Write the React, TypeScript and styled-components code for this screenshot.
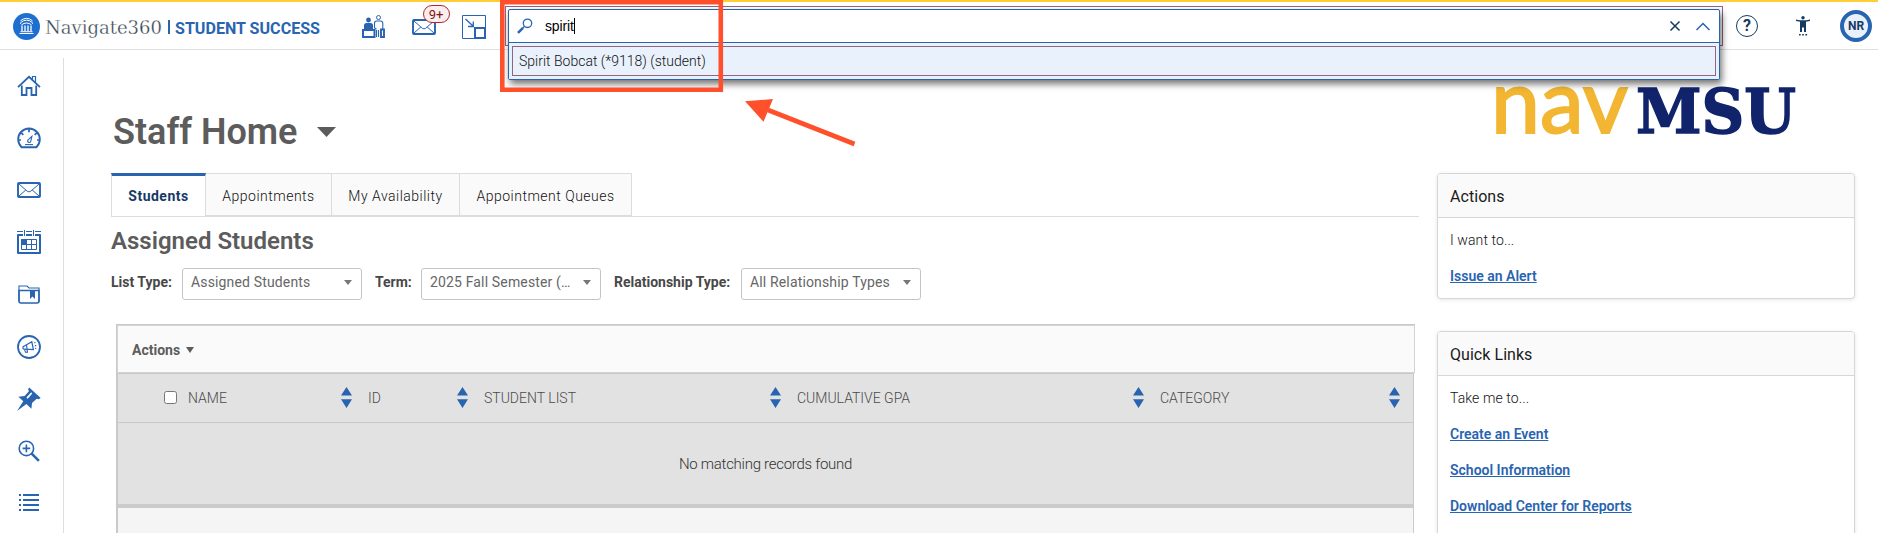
import styled, { createGlobalStyle } from "styled-components";

const colors = {
  blue: "#2864b0",
  navy: "#173a64",
  gray: "#5c5c5c",
  line: "#dcdcdc",
  mauve: "#8f6580",
  mark: "#ff4f2b",
};

const HomeIcon = () => (
  <svg width="24" height="22" viewBox="0 0 24 22" fill="none" stroke={colors.blue}>
    <path d="M1 12.2 12 1.8l11 10.4" strokeWidth="1.8" />
    <path d="M4.8 10.5V20h4.7v-7h5v7h4.7v-9.5" strokeWidth="1.8" />
    <path d="M15.5 4V1.5h3V7" strokeWidth="1.2" />
  </svg>
);

const GaugeIcon = () => (
  <svg width="24" height="21" viewBox="0 0 24 21" fill="none" stroke={colors.blue}>
    <path d="M4.6 19.2A10.8 10.8 0 1 1 19.4 19.2Z" strokeWidth="1.9" strokeLinejoin="round" />
    <path d="M12 1v3.2M1 12h3M20 12h3M4.3 4.8l2 2M19.7 4.8l-2 2" strokeWidth="1.7" />
    <path d="M14.9 8.3 13.8 13a1.6 1.6 0 1 1-2.2-1.6Z" strokeWidth="1.1" />
    <path d="M8 16.6h8" strokeWidth="1.1" />
  </svg>
);

const MailIcon = () => (
  <svg width="24" height="16" viewBox="0 0 24 16" fill="none" stroke={colors.blue}>
    <rect x="1" y="1" width="22" height="14" rx="1" strokeWidth="1.9" />
    <path d="m2 2 8.2 7.2q1.8 1.4 3.6 0L22 2M2 14l6.8-6M22 14l-6.8-6" strokeWidth="1" />
  </svg>
);

const CalendarIcon = () => (
  <svg width="24" height="24" viewBox="0 0 24 24" fill="none" stroke={colors.blue}>
    <path d="M0 1.5h6M9 1.5h6M18 1.5h6M7.5 0v6M16.5 0v6" strokeWidth="1" />
    <path d="M6 5H1v18h22V5h-5M9 5h6" strokeWidth="2" strokeLinejoin="round" />
    <path d="M4.5 9.5h15v10h-15zM4.5 14.5h15M9.5 9.5v10M14.5 9.5v10" strokeWidth="1" />
    <path d="M4.5 9.5h5v5h-5z" fill={colors.blue} />
  </svg>
);

const FolderIcon = () => (
  <svg width="22" height="19" viewBox="0 0 22 19" fill="none" stroke={colors.blue}>
    <path d="M1 16V1h8l2 2h10v13.5" strokeWidth="1.1" />
    <path d="M1 5.5h20V16q0 2-2 2H3q-2 0-2-2Z" strokeWidth="1.6" />
    <path d="M12 5h5v9l-2.5-2.4L12 14Z" fill={colors.blue} stroke="none" />
  </svg>
);

const MegaphoneIcon = () => (
  <svg width="24" height="24" viewBox="0 0 24 24" fill="none" stroke={colors.blue}>
    <circle cx="12" cy="12" r="11" strokeWidth="1.8" />
    <path d="m7 11.2 7.8-4.4 1.6 7.8-8.6-.4a1.5 1.5 0 0 1-.8-3Z" strokeWidth="1.2" />
    <path d="m7.5 14.3 1 3h2l-.5-3M9.5 10l.6 4M17.4 8l1-.7M17.8 10.6h1.4M18.2 13.3l1 .6" strokeWidth="1.1" />
  </svg>
);

const PinIcon = () => (
  <svg width="24" height="24" viewBox="0 0 24 24" fill={colors.blue}>
    <path d="M12.2.4 23.7 11l-2 1.2-2-.4-4.7 4.3-.6 5.6-5-4.6L0 24l6.3-9.8-4.9-4.4 6.2-.8 4.3-4.8-.8-2Z" />
    <path d="m14.2 6.5-3.7 4.1" stroke="#fff" strokeWidth="1.8" strokeLinecap="round" />
  </svg>
);

const ZoomInIcon = () => (
  <svg width="22" height="22" viewBox="0 0 22 22" fill="none" stroke={colors.blue}>
    <circle cx="8.4" cy="8.4" r="7.2" strokeWidth="1.6" />
    <path d="M8.4 4.6v7.6M4.6 8.4h7.6" strokeWidth="1.6" />
    <path d="m13.4 13.4 7.5 7.5" strokeWidth="2.6" />
  </svg>
);

const ListIcon = () => (
  <svg width="20" height="18" viewBox="0 0 20 18" stroke={colors.blue} strokeWidth="2">
    <path d="M0 1h2M4 1h16M0 6h2M4 6h16M0 11h2M4 11h16M0 16h2M4 16h16" />
  </svg>
);

const PeopleIcon = () => (
  <svg width="23" height="23" viewBox="0 0 23 23" fill="none" stroke={colors.blue}>
    <circle cx="6.5" cy="5" r="2.4" fill={colors.blue} stroke="none" />
    <path d="M2 14v-3.5q0-2.5 2.5-2.5h4Q11 8 11 10.5V14Z" fill={colors.blue} stroke="none" />
    <path d="M1 15h11.5v7H1Z" strokeWidth="2" />
    <circle cx="16.5" cy="2.5" r="2" strokeWidth="1" />
    <path d="M14.5 15v7M14.5 14l-2-1V8.5q0-2.5 2-2.5h4q2.3 0 2.3 2.5V14M16.5 15v7" strokeWidth="1.1" />
    <path d="M19 14.5h3V22h-3Z" strokeWidth="1.9" />
  </svg>
);

const ResizeIcon = () => (
  <svg width="24" height="24" viewBox="0 0 24 24" fill="none" stroke={colors.blue}>
    <path d="M.5.5h23v23H.5Z" strokeWidth="1" />
    <path d="M13 13h10v10H13Z" strokeWidth="2" />
    <path d="m3.5 4 7.5 7M11.3 6.5v5H6" strokeWidth="1.3" />
  </svg>
);

const SearchIcon = () => (
  <svg width="16" height="16" viewBox="0 0 16 16" fill="none" stroke={colors.blue}>
    <circle cx="10.5" cy="5.3" r="4.2" strokeWidth="1.3" />
    <path d="m7.3 8.5-1.6 1.6" strokeWidth="1.3" />
    <path d="m6 9.8-5 5" strokeWidth="2.4" />
  </svg>
);

const AccessIcon = () => (
  <svg width="16" height="20" viewBox="0 0 16 20" fill={colors.navy}>
    <circle cx="8" cy="1.7" r="1.7" />
    <path d="M1 3.4q7 1.8 14 0v1.7l-4 .7V16H9v-4.5H7V16H5V5.8l-4-.7Z" />
    <path d="M4 18h1.7v1.5H4zM7.2 18h1.7v1.5H7.2zM10.4 18h1.7v1.5h-1.7z" />
  </svg>
);

const LogoMark = () => (
  <svg width="27" height="27" viewBox="0 0 27 27" fill="none" stroke="#fff">
    <circle cx="13.5" cy="13.5" r="13.5" fill="#1f6fd0" stroke="none" />
    <path d="M7.5 10.8V9.8q6-5.4 12 0v1M7.500 7.800q6-5 12 0M8.500 11.800q5-3.600 10 0" strokeWidth="1" />
    <path d="M9 12.5V18M12 12.5V18M15 12.5V18M18 12.5V18" strokeWidth="1.3" />
    <path d="M7.5 18.7h12M6.5 20.5h14" strokeWidth="1" />
  </svg>
);

const SortIcon = () => (
  <svg width="11" height="21" viewBox="0 0 11 21" fill={colors.blue}>
    <path d="M5.5 0 11 8.5H0ZM5.5 21 0 12.2h11Z" />
  </svg>
);

const Caret = ({ width = 8, height = 5, color = "#777" }) => (
  <svg width={width} height={height} viewBox="0 0 10 6" preserveAspectRatio="none" fill={color}>
    <path d="M0 0h10L5 6Z" />
  </svg>
);

const sideIcons = [
  HomeIcon,
  GaugeIcon,
  MailIcon,
  CalendarIcon,
  FolderIcon,
  MegaphoneIcon,
  PinIcon,
  ZoomInIcon,
  ListIcon,
];

const tabs = [
  { label: "Students", width: 95 },
  { label: "Appointments", width: 126 },
  { label: "My Availability", width: 128 },
  { label: "Appointment Queues", width: 172 },
];

const filters = [
  { label: "List Type:", value: "Assigned Students", labelWidth: 71 },
  { label: "Term:", value: "2025 Fall Semester (…", labelWidth: 46 },
  { label: "Relationship Type:", value: "All Relationship Types", labelWidth: 127 },
];

const columns = ["NAME", "ID", "STUDENT LIST", "CUMULATIVE GPA", "CATEGORY"];

const App = () => {
  return (
    <>
      <GlobalStyle />
      <Header>
        <Brand>
          <LogoMark />
          <svg className="wordmark" width="118" height="27">
            <text x="0" y="20.5" textLength="117" lengthAdjust="spacingAndGlyphs">
              Navigate360
            </text>
          </svg>
          <span className="divider" />
          <svg className="product" width="146" height="27">
            <text x="0" y="20.5" textLength="145" lengthAdjust="spacingAndGlyphs">
              STUDENT SUCCESS
            </text>
          </svg>
        </Brand>
        <QuickIcons>
          <PeopleIcon />
          <MailButton>
            <MailIcon />
            <Badge>9+</Badge>
          </MailButton>
          <ResizeIcon />
        </QuickIcons>
        <SearchOutline>
          <SearchBox>
            <SearchField>
              <SearchIcon />
              <span className="query">spirit</span>
              <svg width="10" height="10" viewBox="0 0 10 10" stroke={colors.navy} strokeWidth="1.5">
                <path d="m.5.5 9 9M9.5.5l-9 9" />
              </svg>
              <svg width="14" height="9" viewBox="0 0 14 9" fill="none" stroke={colors.blue} strokeWidth="1.5">
                <path d="m.5 8 6.5-6.5L13.5 8" />
              </svg>
            </SearchField>
            <Suggestions>
              <Suggestion>Spirit Bobcat (*9118) (student)</Suggestion>
            </Suggestions>
          </SearchBox>
        </SearchOutline>
        <UserTools>
          <HelpButton>?</HelpButton>
          <AccessIcon />
          <Avatar>NR</Avatar>
        </UserTools>
      </Header>

      <Body>
        <Sidebar>
          {sideIcons.map((Icon, i) => (
            <SideItem key={i}>
              <Icon />
            </SideItem>
          ))}
        </Sidebar>

        <Main>
          <PageTitle>
            Staff Home
            <Caret width={19} height={10} color={colors.gray} />
          </PageTitle>
          <TabBar>
            {tabs.map((tab, i) => (
              <Tab key={tab.label} $active={i === 0} $width={tab.width}>
                {tab.label}
              </Tab>
            ))}
          </TabBar>
          <SectionTitle>Assigned Students</SectionTitle>
          <FilterRow>
            {filters.map((filter) => (
              <Filter key={filter.label}>
                <FilterLabel $width={filter.labelWidth}>{filter.label}</FilterLabel>
                <Select>
                  {filter.value}
                  <Caret />
                </Select>
              </Filter>
            ))}
          </FilterRow>
          <TablePanel>
            <TableToolbar>
              Actions
              <Caret width={8} height={6} color={colors.gray} />
            </TableToolbar>
            <Table>
              <TableHead>
                {columns.map((column, i) => (
                  <HeadCell key={column} $first={i === 0}>
                    {i === 0 && <input type="checkbox" />}
                    <span>{column}</span>
                    <SortIcon />
                  </HeadCell>
                ))}
              </TableHead>
              <EmptyRow>No matching records found</EmptyRow>
            </Table>
          </TablePanel>
        </Main>

        <Aside>
          <CampusLogo width="305" height="55" viewBox="0 0 305 55">
            <text className="nav" x="-4" y="51" textLength="137" lengthAdjust="spacingAndGlyphs">
              nav
            </text>
            <text className="msu" x="141" y="50.5" textLength="160" lengthAdjust="spacingAndGlyphs">
              MSU
            </text>
          </CampusLogo>
          <Card>
            <h2>Actions</h2>
            <div className="content">
              <p>I want to...</p>
              <a href="#">Issue an Alert</a>
            </div>
          </Card>
          <Card $grow>
            <h2>Quick Links</h2>
            <div className="content">
              <p>Take me to...</p>
              <a href="#">Create an Event</a>
              <a href="#">School Information</a>
              <a href="#">Download Center for Reports</a>
            </div>
          </Card>
        </Aside>
      </Body>

      <Callout width="400" height="160" viewBox="480 0 400 160">
        <path d="M502.3 2.2h218.5v87.5H502.3Z" fill="none" stroke={colors.mark} strokeWidth="4.6" />
        <path d="m768 110 86.5 34" stroke={colors.mark} strokeWidth="4.6" />
        <path d="m745 101.3 28-2.3-9.5 22.8Z" fill={colors.mark} />
      </Callout>
    </>
  );
};

const GlobalStyle = createGlobalStyle`
  * {
    box-sizing: border-box;
  }
  body {
    margin: 0;
    height: 533px;
    overflow: hidden;
    background: #fff;
    font-family: Roboto, "Liberation Sans", sans-serif;
    color: #2b2b2b;
  }
  svg {
    display: block;
    flex-shrink: 0;
    overflow: visible;
  }
`;

const Header = styled.header`
  display: flex;
  height: 50px;
  border-top: 2px solid #ffcd34;
  border-bottom: 1px solid #e0e0e0;
`;

const Brand = styled.div`
  display: flex;
  align-items: center;
  width: 362px;
  height: 49px;
  padding-left: 13px;

  .wordmark {
    margin-left: 5px;
    font-family: "DejaVu Serif", serif;
    font-size: 19px;
    fill: #34434f;
    stroke: #fff;
    stroke-width: 0.3px;
  }
  .divider {
    width: 2px;
    height: 14px;
    margin: 0 5px 0 5px;
    background: ${colors.blue};
  }
  .product {
    font-size: 17px;
    font-weight: 700;
    fill: ${colors.blue};
  }
`;

const QuickIcons = styled.div`
  display: flex;
  align-items: center;
  gap: 26.5px;
  width: 143px;
  height: 49px;
`;

const MailButton = styled.div`
  position: relative;
`;

const Badge = styled.span`
  position: absolute;
  top: -14px;
  left: 11px;
  width: 27px;
  height: 18px;
  border: 1px solid #b3262b;
  border-radius: 9px;
  background: #fdeeee;
  color: #7d1518;
  font-size: 13px;
  line-height: 17px;
  text-align: center;
`;

const SearchOutline = styled.div`
  width: 1218px;
  height: 40px;
  margin-top: 4px;
  padding: 2px;
  border: 1px solid ${colors.mauve};
`;

const SearchBox = styled.div`
  position: relative;
  z-index: 2;
  width: 1212px;
  height: 71px;
  border: 1px solid ${colors.blue};
  border-radius: 2px;
  background: #fff;
  box-shadow: 2px 4px 7px rgba(0, 0, 0, 0.55);
`;

const SearchField = styled.div`
  display: flex;
  align-items: center;
  height: 32px;
  padding: 0 9px 0 8px;

  .query {
    margin: 0 auto 0 12px;
    border-right: 1px solid #000;
    color: #000;
    font-family: "Liberation Sans", Arial, sans-serif;
    font-size: 14px;
    line-height: 16px;
    letter-spacing: -0.15px;
  }
  svg + svg {
    margin-left: 16px;
  }
`;

const Suggestions = styled.div`
  height: 37px;
  padding: 3px;
  border-top: 1px solid ${colors.blue};
  background: #e9f1fc;
`;

const Suggestion = styled.div`
  height: 30px;
  padding-left: 6px;
  border: 1px solid ${colors.mauve};
  color: #111;
  font-size: 14px;
  font-weight: 300;
  line-height: 28px;
`;

const UserTools = styled.div`
  display: flex;
  align-items: center;
  height: 47px;
  padding-left: 13px;
  gap: 37px;
`;

const HelpButton = styled.div`
  width: 22px;
  height: 22px;
  border: 1px solid ${colors.navy};
  border-radius: 50%;
  color: ${colors.navy};
  font-size: 16px;
  font-weight: 700;
  line-height: 20px;
  text-align: center;
`;

const Avatar = styled.div`
  width: 32px;
  height: 32px;
  margin-left: -8px;
  border: 4px solid ${colors.blue};
  border-radius: 50%;
  background: #e9f1fc;
  color: ${colors.navy};
  font-size: 12px;
  font-weight: 700;
  line-height: 25px;
  text-align: center;
`;

const Body = styled.div`
  display: flex;
  height: 483px;
`;

const Sidebar = styled.nav`
  width: 64px;
  height: 475px;
  margin-top: 8px;
  padding-top: 2px;
  border-right: 1px solid #dedede;
`;

const SideItem = styled.div`
  display: flex;
  align-items: center;
  justify-content: center;
  width: 58px;
  height: 52.1px;
`;

const Main = styled.main`
  width: 1308px;
  margin-left: 47px;
  padding-top: 61px;
`;

const PageTitle = styled.h1`
  display: flex;
  align-items: center;
  gap: 20px;
  height: 42px;
  margin: 0 0 20px;
  padding-left: 2px;
  color: ${colors.gray};
  font-size: 36px;
  font-weight: 600;
`;

const TabBar = styled.div`
  display: flex;
  height: 44px;
  border-bottom: 1px solid ${colors.line};
`;

const Tab = styled.div<{ $active: boolean; $width: number }>`
  width: ${(p) => p.$width}px;
  height: ${(p) => (p.$active ? 44 : 43)}px;
  border: 1px solid ${colors.line};
  border-left-width: ${(p) => (p.$active ? 1 : 0)}px;
  border-top: ${(p) => (p.$active ? `3px solid ${colors.blue}` : `1px solid ${colors.line}`)};
  background: ${(p) => (p.$active ? "#fff" : "#fafafa")};
  color: ${(p) => (p.$active ? colors.navy : "#111")};
  font-size: 14px;
  font-weight: ${(p) => (p.$active ? 700 : 300)};
  letter-spacing: 0.5px;
  line-height: ${(p) => (p.$active ? 41 : 45)}px;
  text-align: center;
`;

const SectionTitle = styled.h2`
  height: 30px;
  margin: 9px 0 12px;
  color: ${colors.gray};
  font-size: 24px;
  font-weight: 600;
  line-height: 30px;
`;

const FilterRow = styled.div`
  display: flex;
  gap: 13px;
`;

const Filter = styled.div`
  display: flex;
`;

const FilterLabel = styled.span<{ $width: number }>`
  width: ${(p) => p.$width}px;
  color: #484848;
  font-size: 14px;
  font-weight: 700;
  line-height: 29px;
  white-space: nowrap;
`;

const Select = styled.div`
  display: flex;
  align-items: center;
  justify-content: space-between;
  width: 180px;
  height: 32px;
  padding: 0 9px 4px 8px;
  border: 1px solid #c4c4c4;
  border-radius: 3px;
  color: #666;
  font-size: 14px;
  letter-spacing: 0.15px;
  white-space: nowrap;
`;

const TablePanel = styled.section`
  width: 1299px;
  height: 220px;
  margin: 24px 0 0 5px;
  border-top: 1px solid #c9c9c9;
  border-left: 1px solid #c9c9c9;
`;

const TableToolbar = styled.div`
  display: flex;
  align-items: center;
  gap: 6px;
  height: 48px;
  padding: 1px 0 0 14px;
  border: 1px solid #d4d4d4;
  background: #fafafa;
  color: ${colors.gray};
  font-size: 14px;
  font-weight: 700;
`;

const Table = styled.div`
  width: 1297px;
  height: 171px;
  border-right: 1px solid #cacaca;
  border-left: 1px solid #cacaca;
  background: #f5f5f5;
`;

const TableHead = styled.div`
  display: grid;
  grid-template-columns: 242px 116px 313px 363px 1fr;
  height: 50px;
  border-top: 1px solid #c8c8c8;
  border-bottom: 1px solid #c8c8c8;
  background: #e2e2e2;
`;

const HeadCell = styled.div<{ $first: boolean }>`
  display: flex;
  align-items: center;
  padding: 0 8px 1px ${(p) => (p.$first ? 46 : 8)}px;
  color: #4a4a4a;
  font-size: 14px;
  font-weight: 300;

  &:last-child {
    padding-right: 13px;
  }
  input {
    width: 13px;
    height: 13px;
    margin: 0 11px 0 0;
  }
  span {
    margin-right: auto;
  }
`;

const EmptyRow = styled.div`
  height: 85px;
  border-bottom: 4px solid #cbcbcb;
  background: #e2e2e2;
  color: #333;
  font-size: 15px;
  font-weight: 300;
  letter-spacing: -0.27px;
  line-height: 82px;
  text-align: center;
`;

const Aside = styled.aside`
  width: 418px;
  margin-left: 18px;
  padding-top: 32px;
`;

const CampusLogo = styled.svg`
  margin: 0 0 36px 58px;

  .nav {
    fill: #f2b632;
    stroke: #f2b632;
    stroke-width: 2px;
    font-family: Lato, sans-serif;
    font-size: 89px;
  }
  .msu {
    fill: #11246b;
    stroke: #11246b;
    stroke-width: 1.5px;
    font-family: "DejaVu Serif", serif;
    font-size: 62px;
    font-weight: 700;
  }
`;

const Card = styled.section<{ $grow?: boolean }>`
  min-height: ${(p) => (p.$grow ? 240 : 0)}px;
  margin-bottom: 32px;
  border: 1px solid #d6d6d6;
  border-radius: 4px;
  background: #fff;
  box-shadow: 0 1px 4px rgba(0, 0, 0, 0.1);

  h2 {
    height: 44px;
    margin: 0;
    padding-left: 12px;
    border-bottom: 1px solid #d6d6d6;
    border-radius: 3px 3px 0 0;
    background: #fafafa;
    color: #1a1a1a;
    font-size: 16px;
    font-weight: 450;
    letter-spacing: 0.05px;
    line-height: 45px;
  }
  .content {
    display: flex;
    flex-direction: column;
    align-items: flex-start;
    gap: 18px;
    padding: 13px 12px;
  }
  p,
  a {
    margin: 0;
    font-size: 14px;
    line-height: 18px;
  }
  p {
    color: #111;
    font-weight: 300;
    letter-spacing: 0.1px;
  }
  a {
    color: ${colors.blue};
    font-weight: 600;
  }
`;

const Callout = styled.svg`
  position: absolute;
  top: 0;
  left: 480px;
  z-index: 3;
  pointer-events: none;
`;

export default App;
